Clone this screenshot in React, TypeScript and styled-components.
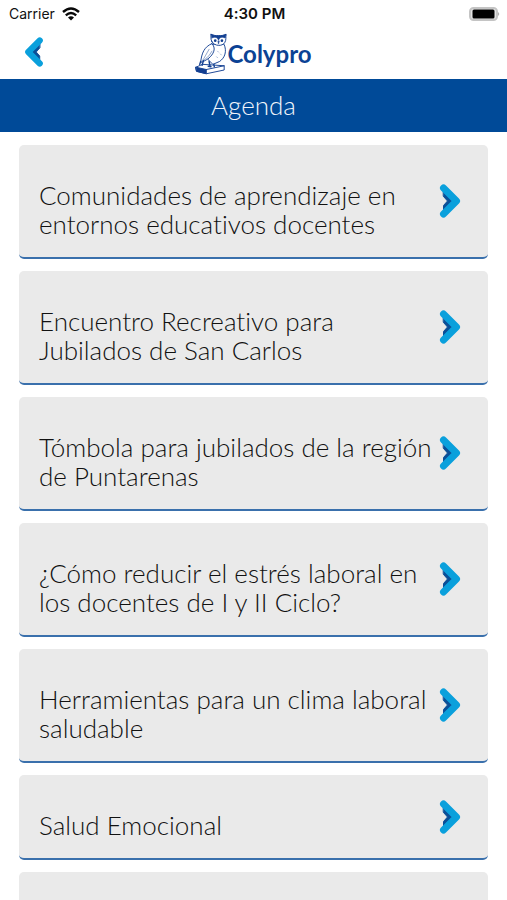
import React from 'react';
import styled, { createGlobalStyle } from 'styled-components';

const GlobalStyle = createGlobalStyle`
  * { box-sizing: border-box; }
  body { margin: 0; background: #fff; }
`;

const Screen = styled.div`
  height: 100vh;
  display: flex;
  flex-direction: column;
  overflow: hidden;
  background: #fff;
  font-family: Lato, 'Open Sans', sans-serif;
  font-variant-ligatures: none;
`;

const StatusBar = styled.div`
  display: grid;
  grid-template-columns: 1fr auto 1fr;
  align-items: center;
  height: 28px;
  padding: 0 7px 0 9px;
  color: #111;
  font-family: Inter, sans-serif;
  line-height: 20px;
`;

const Carrier = styled.div`
  display: flex;
  align-items: center;
  gap: 7px;
  font-size: 14px;
`;

const Clock = styled.time`
  font-size: 15px;
  font-weight: 600;
`;

const BatterySlot = styled.div`
  display: flex;
  justify-content: flex-end;
`;

const NavBar = styled.header`
  display: grid;
  grid-template-columns: 1fr auto 1fr;
  align-items: center;
  height: 51px;
  padding: 0 24px;
`;

const BackButton = styled.button`
  display: flex;
  justify-self: start;
  padding: 0 0 4px;
  border: 0;
  background: none;
  cursor: pointer;
`;

const Brand = styled.div`
  display: flex;
  align-items: center;
  color: #0b4294;
  font-size: 24px;
  font-weight: 700;
  line-height: 44px;
`;

const TitleBar = styled.h1`
  display: flex;
  flex: none;
  align-items: center;
  justify-content: center;
  height: 53px;
  margin: 0;
  background: #004a98;
  color: #f0f5fb;
  font-size: 26px;
  font-weight: 300;
  line-height: 29px;
`;

const EventList = styled.ul`
  display: flex;
  flex: 1;
  flex-direction: column;
  gap: 12px;
  min-height: 0;
  margin: 0;
  padding: 13px 19px;
  overflow-y: auto;
  scrollbar-width: none;
  list-style: none;
`;

const EventItem = styled.li`
  flex: none;
`;

const EventCard = styled.button<{ $tall?: boolean }>`
  display: flex;
  align-items: center;
  width: 100%;
  min-height: ${(p) => (p.$tall ? '114px' : '85px')};
  padding: 0 27px 0 20px;
  border: 0;
  border-bottom: 2px solid #3a70ac;
  border-radius: 5px;
  background: #eaeaea;
  color: #111;
  font: inherit;
  text-align: left;
  cursor: pointer;
`;

const EventTitle = styled.span`
  flex: 1;
  padding: 36px 0 18px;
  font-size: 26px;
  font-weight: 300;
  line-height: 29px;
  white-space: pre-line;
`;

const Chevron = ({ back = false }: { back?: boolean }) => (
  <svg
    width={back ? 20 : 22}
    height={back ? 30 : 34}
    viewBox="0 0 22 34"
    fill="none"
    strokeLinecap="round"
    strokeLinejoin="round"
    aria-hidden="true"
  >
    <g transform={back ? 'matrix(-1 0 0 1 22 0)' : undefined}>
      <path d="M4.500 8 L14 17 L4.500 26 L4.500 21.500 L8.500 17 L4.500 12.500Z" fill="#0b4f97" stroke="#0b4f97" strokeWidth="1" />
      <path d="M4.500 4 L17.500 17 L4.500 30" stroke="#0aa0dc" strokeWidth="7" />
    </g>
  </svg>
);

const WifiIcon = () => (
  <svg width="18" height="14" viewBox="0 0 18 14" fill="none" stroke="#080808" strokeWidth="2.400" aria-label="Wi-Fi">
    <path d="M1 5 Q9 -2 17 5" />
    <path d="M3.800 8.300 Q9 3.800 14.200 8.300" />
    <path d="M6 10.500 Q9 8 12 10.500 L9 13.500Z" fill="#080808" stroke="none" />
  </svg>
);

const BatteryIcon = () => (
  <svg width="31" height="14" viewBox="0 0 31 14" aria-label="Battery">
    <rect x="1" y="1" width="27" height="12" rx="3.500" fill="#e4e4e4" stroke="#c4c4c4" strokeWidth="2" />
    <rect x="3.500" y="2.500" width="22" height="9" rx="1.500" fill="#000" />
    <path d="M29 5 Q31.500 7 29 9Z" fill="#b0b0b0" />
  </svg>
);

const OwlLogo = () => (
  <svg width="32" height="44" viewBox="0 0 34 44" fill="none" stroke="#123f91" strokeLinecap="round" strokeLinejoin="round" aria-hidden="true">
    <path d="M31 12 C34 19 32 26 26 30 L19 33 L14 28 L19 12Z" fill="#fff" strokeWidth="1" />
    <path d="M18 11 C10 14 7 21 6 31 C12 29 18 25 20 19 C21 16 20 13 18 11Z" fill="#fff" strokeWidth="1" />
    <path d="M18 9 C16 6 17.500 3 17 1 C20 2.500 22 2.500 25 2.500 C28 2.500 30 2.500 33 1 C32.500 4 33.500 7 31.500 10 C29 14 21 14 18 9Z" fill="#fff" strokeWidth="1" />
    <path d="M17 1 C20 2.500 22 2.500 25 2.500 C28 2.500 30 2.500 33 1 L32 5 C29 3.500 26 4 25 7.500 C24 4 21 3.500 18 5Z" fill="#123f91" strokeWidth=".6" />
    <circle cx="21.500" cy="7.800" r="1.400" fill="#123f91" stroke="none" />
    <circle cx="28.600" cy="7.800" r="1.400" fill="#123f91" stroke="none" />
    <path d="M24.300 8.500 L25 11.500 L25.800 8.500Z" fill="#123f91" strokeWidth=".5" />
    <path d="M15 17 C12 22 10 26 8 29 M18 19 C15 24 13 26 10 28" strokeWidth=".5" />
    <path d="M24 19 L25 20 M27 22 L28 23 M23 25 L24 26" strokeWidth=".4" />
    <path d="M1 36 L8 33 L31 34.500 L31 39 L12 43 L2 40.500Z" fill="#fff" strokeWidth="1" />
    <path d="M1 36 L12 38.500 L12 43 L2 40.500Z" fill="#123f91" strokeWidth="1" />
    <path d="M12 38.500 L31 34.500" strokeWidth="1" />
    <path d="M6 30 L5 33 M9 29 L7.500 34 M15 30 L16 35 M20 33 L20.500 35.500 M14 35 L17 35.500" strokeWidth="1.500" />
  </svg>
);

const events: { title: string; tall?: boolean }[] = [
  { title: 'Comunidades de aprendizaje en\nentornos educativos docentes' },
  { title: 'Encuentro Recreativo para\nJubilados de San Carlos' },
  { title: 'Tómbola para jubilados de la región\nde Puntarenas' },
  { title: '¿Cómo reducir el estrés laboral en\nlos docentes de I y II Ciclo?' },
  { title: 'Herramientas para un clima laboral\nsaludable' },
  { title: 'Salud Emocional' },
  { title: '', tall: true },
];

export default function App() {
  return (
    <Screen>
      <GlobalStyle />
      <StatusBar>
        <Carrier>
          Carrier <WifiIcon />
        </Carrier>
        <Clock>4:30 PM</Clock>
        <BatterySlot>
          <BatteryIcon />
        </BatterySlot>
      </StatusBar>
      <NavBar>
        <BackButton type="button" aria-label="Volver">
          <Chevron back />
        </BackButton>
        <Brand>
          <OwlLogo />
          Colypro
        </Brand>
      </NavBar>
      <TitleBar>Agenda</TitleBar>
      <EventList>
        {events.map((event, index) => (
          <EventItem key={index}>
            <EventCard type="button" $tall={event.tall}>
              <EventTitle>{event.title}</EventTitle>
              <Chevron />
            </EventCard>
          </EventItem>
        ))}
      </EventList>
    </Screen>
  );
}
